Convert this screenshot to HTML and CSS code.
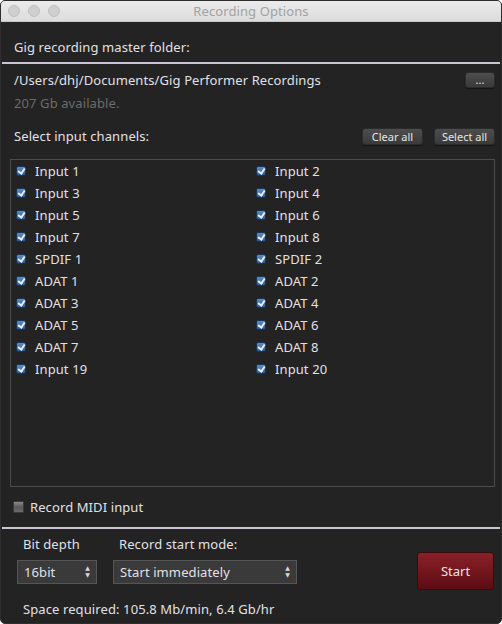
FILE: index.html
```html
<!DOCTYPE html>
<html lang="en">
<head>
    <meta charset="UTF-8">
    <title>Recording Options</title>
    <link rel="stylesheet" href="styles.css">
</head>
<body>
<div class="window">
    <div class="titlebar">
        <div class="lights"><span></span><span></span><span></span></div>
        <div class="title">Recording Options</div>
    </div>

    <div class="content">
        <div class="section-label">Gig recording master folder:</div>
        <div class="divider"></div>

        <div class="folder-row">
            <span class="path">/Users/dhj/Documents/Gig Performer Recordings</span>
            <button class="small-button dots">...</button>
        </div>
        <div class="available">207 Gb available.</div>

        <div class="channels-head">
            <span class="section-label">Select input channels:</span>
            <div class="head-buttons">
                <button class="small-button">Clear all</button>
                <button class="small-button">Select all</button>
            </div>
        </div>

        <div class="channel-list">
            <label class="channel"><span class="check on"></span>Input 1</label>
            <label class="channel"><span class="check on"></span>Input 2</label>
            <label class="channel"><span class="check on"></span>Input 3</label>
            <label class="channel"><span class="check on"></span>Input 4</label>
            <label class="channel"><span class="check on"></span>Input 5</label>
            <label class="channel"><span class="check on"></span>Input 6</label>
            <label class="channel"><span class="check on"></span>Input 7</label>
            <label class="channel"><span class="check on"></span>Input 8</label>
            <label class="channel"><span class="check on"></span>SPDIF 1</label>
            <label class="channel"><span class="check on"></span>SPDIF 2</label>
            <label class="channel"><span class="check on"></span>ADAT 1</label>
            <label class="channel"><span class="check on"></span>ADAT 2</label>
            <label class="channel"><span class="check on"></span>ADAT 3</label>
            <label class="channel"><span class="check on"></span>ADAT 4</label>
            <label class="channel"><span class="check on"></span>ADAT 5</label>
            <label class="channel"><span class="check on"></span>ADAT 6</label>
            <label class="channel"><span class="check on"></span>ADAT 7</label>
            <label class="channel"><span class="check on"></span>ADAT 8</label>
            <label class="channel"><span class="check on"></span>Input 19</label>
            <label class="channel"><span class="check on"></span>Input 20</label>
        </div>

        <label class="midi"><span class="check off"></span>Record MIDI input</label>
    </div>

    <div class="divider bottom"></div>

    <div class="footer">
        <div class="footer-row">
            <div class="field">
                <div class="field-label">Bit depth</div>
                <div class="select bits">16bit<span class="arrows">&#9650;<br>&#9660;</span></div>
            </div>
            <div class="field">
                <div class="field-label">Record start mode:</div>
                <div class="select mode">Start immediately<span class="arrows">&#9650;<br>&#9660;</span></div>
            </div>
            <button class="start-button">Start</button>
        </div>
        <div class="space">Space required: 105.8 Mb/min, 6.4 Gb/hr</div>
    </div>
</div>
</body>
</html>
```

FILE: styles.css
```css
/* Window frame */
body {
    margin: 0;
    background-color: #ffffff;
    font-family: 'Noto Sans', 'DejaVu Sans', sans-serif;
    font-size: 13px;
    letter-spacing: 0.1px;
}

.window {
    width: 502px;
    height: 624px;
    box-sizing: border-box;
    background-color: #232323;
    border: 1px solid #2e2e2e;
    border-radius: 5px;
    overflow: hidden;
    display: flex;
    flex-direction: column;
    color: #e2e0e6;
}

.titlebar {
    height: 20px;
    background: linear-gradient(#ebebeb, #dcdcdc);
    border-bottom: 1px solid #c6c6c6;
    display: flex;
    align-items: center;
    position: relative;
    flex-shrink: 0;
}

.lights {
    display: flex;
    gap: 8px;
    padding-left: 7px;
}

.lights span {
    width: 12px;
    height: 12px;
    border-radius: 50%;
    background-color: #cfcfcf;
    border: 1px solid #c0c0c0;
    box-sizing: border-box;
}

.title {
    position: absolute;
    left: 0;
    right: 0;
    text-align: center;
    color: #a2a2a2;
    font-size: 13px;
}

/* Main area */
.section-label {
    padding: 17px 0 0 13px;
    line-height: 17px;
}

.divider {
    height: 2px;
    background-color: #c9c3d3;
    margin: 6px 1px 0 1px;
}

.folder-row {
    display: flex;
    justify-content: space-between;
    align-items: center;
    padding: 7px 6px 0 13px;
}

.available {
    color: #6b6b6b;
    padding: 5px 0 0 13px;
}

.channels-head {
    display: flex;
    justify-content: space-between;
    align-items: center;
}

.channels-head .section-label {
    padding-top: 16px;
}

.head-buttons {
    display: flex;
    gap: 11px;
    padding: 15px 6px 0 0;
}

.small-button {
    height: 17px;
    min-width: 61px;
    padding: 0 6px;
    font-family: inherit;
    font-size: 11px;
    color: #e6e6e6;
    background: linear-gradient(#4d4d4d, #3a3a3a);
    border: 1px solid #2c2c2c;
    border-radius: 3px;
    box-shadow: 0 1px 1px rgba(0, 0, 0, 0.4);
}

.small-button.dots {
    min-width: 30px;
    height: 16px;
    line-height: 8px;
}

/* Channel list */
.channel-list {
    margin: 14px 6px 0 9px;
    height: 328px;
    box-sizing: border-box;
    border: 1px solid #4b4b4b;
    padding: 0 0 0 5px;
    display: grid;
    grid-template-columns: 240px 1fr;
    grid-auto-rows: 22px;
    align-content: start;
}

.channel {
    display: flex;
    align-items: center;
    gap: 9px;
}

.check {
    width: 10px;
    height: 10px;
    box-sizing: border-box;
    border-radius: 2px;
    display: inline-block;
    position: relative;
    flex-shrink: 0;
}

.check.on {
    background: linear-gradient(#5b8ec8, #2c5a94);
    border: 1px solid #1c3454;
}

.check.on::after {
    content: "";
    position: absolute;
    left: 2px;
    top: 0px;
    width: 3px;
    height: 5px;
    border: solid #e8eef6;
    border-width: 0 2px 2px 0;
    transform: rotate(35deg);
}

.check.off {
    width: 11px;
    height: 12px;
    border-radius: 1px;
    background: linear-gradient(#8a8a8a, #5a5a5a 50%, #6a6a6a);
    border: 1px solid #3a3a3a;
}

.midi {
    display: flex;
    align-items: center;
    gap: 6px;
    padding: 11px 0 0 12px;
}

/* Footer */
.divider.bottom {
    margin-top: 11px;
}

.footer {
    padding: 6px 7px 0 16px;
}

.footer-row {
    display: flex;
    align-items: flex-start;
}

.field-label {
    padding-left: 6px;
    line-height: 18px;
}

.field + .field {
    margin-left: 16px;
}

.select {
    margin-top: 7px;
    height: 24px;
    box-sizing: border-box;
    background-color: #3a3a3a;
    border: 1px solid #555;
    display: flex;
    align-items: center;
    justify-content: space-between;
    padding: 0 6px;
}

.select.bits {
    width: 80px;
}

.select.mode {
    width: 184px;
}

.arrows {
    font-size: 6px;
    line-height: 7px;
    color: #d8d8d8;
    text-align: center;
}

.start-button {
    margin: 17px 0 0 auto;
    width: 77px;
    height: 38px;
    font-family: inherit;
    font-size: 13px;
    color: #f0e0e4;
    background: linear-gradient(#8a2128, #5c0c12);
    border: 1px solid #3a0a0e;
    border-radius: 3px;
}

.space {
    padding: 10px 0 0 6px;
}
```
